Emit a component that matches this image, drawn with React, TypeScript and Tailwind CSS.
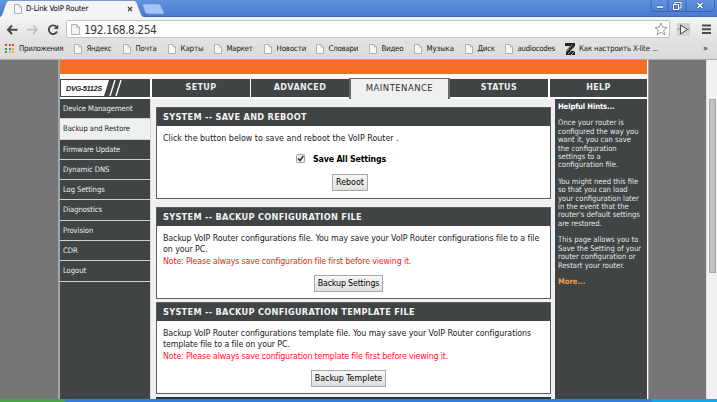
import type { ReactNode } from "react";

const sans = "font-['DejaVu_Sans_Condensed','DejaVu_Sans',sans-serif] [font-stretch:condensed]";

function Page({ large = false }: { large?: boolean }) {
  return (
    <svg viewBox="0 0 8 10" className={large ? "h-[11px] w-[9px] shrink-0" : "h-[10px] w-[8px] shrink-0"}>
      <path d="M.5.5H5L7.5 3V9.5H.5Z" fill="#f7f7f7" stroke="#a2a2a2" strokeWidth=".8" />
      <path d="M5 .5V3H7.5" fill="none" stroke="#a2a2a2" strokeWidth=".7" />
    </svg>
  );
}

const bookmarks = [
  { label: "Яндекс", cls: "w-[49px] tracking-[-0.3px]" },
  { label: "Почта", cls: "w-[45px] tracking-[-0.2px]" },
  { label: "Карты", cls: "w-[46px] tracking-[-0.1px]" },
  { label: "Маркет", cls: "w-[50px] tracking-[-0.2px]" },
  { label: "Новости", cls: "w-[52px] tracking-[-0.1px]" },
  { label: "Словари", cls: "w-[53px] tracking-[-0.2px]" },
  { label: "Видео", cls: "w-[45px] tracking-[-0.2px]" },
  { label: "Музыка", cls: "w-[51px] tracking-[-0.1px]" },
  { label: "Диск", cls: "w-[40px] tracking-[-0.2px]" },
  { label: "audiocodes", cls: "w-[60px] tracking-[-0.25px]" },
];

const dotColors = ["#e33b2e", "#e33b2e", "#e33b2e", "#30a04c", "#3a7be0", "#f0b020", "#30a04c", "#f0b020", "#f0b020"];

function Chrome() {
  return (
    <header className="h-[60px] shrink-0 border-b border-[#a9adb3] bg-[#dedede]">
      <div className="flex h-[17px] justify-between border-b border-[#3f6cba] bg-gradient-to-b from-[#6092df] to-[#4b7bd0]">
        <div className="relative h-[18px] w-[166px]">
          <svg viewBox="0 0 166 18" className="absolute inset-0 h-[18px] w-[166px]">
            <path d="M0 18V17Q2 16 3 12L6 3Q7 .5 9 .5H134Q136 .5 137 3L141 14Q142 17 145 17V18Z" fill="#f5f5f5" />
            <path d="M0 17Q2 16 3 12L6 3Q7 .5 9 .5H134Q136 .5 137 3L141 14Q142 17 145 17" fill="none" stroke="#587eb9" strokeWidth=".6" />
            <path d="M144 4H158Q160 4 161 6L164 13Q164 14 162 14H149Q146 14 145 12L143 6Q142 4 144 4Z" fill="#a4c5f6" stroke="#6f98d9" strokeWidth=".7" />
            <path d="M128 7l4 4m0-4l-4 4" stroke="#444" strokeWidth="1.2" />
          </svg>
          <div className="relative flex h-[18px] items-center gap-[4px] pl-[14px] text-[7.8px] tracking-[-0.14px] text-black">
            <Page />
            <span>D-Link VoIP Router</span>
          </div>
        </div>
        <svg viewBox="0 0 66 13" className="mr-[1px] h-[13px] w-[66px]">
          <path d="M1 0V9Q1 11.5 4 11.5H61Q64.500 11.5 64.500 8V0M18 0V11M36 0V11" fill="none" stroke="#345d9f" strokeWidth=".8" />
          <path d="M7 7H13" stroke="#34578f" strokeWidth="3.2" />
          <path d="M7 7H13" stroke="#fff" strokeWidth="1.6" />
          <path d="M25 4V2.500H31V8H29M23.500 4.500H28.500V9.500H23.500Z" fill="none" stroke="#34578f" strokeWidth="2.200" />
          <path d="M25 4V2.500H31V8H29M23.500 4.500H28.500V9.500H23.500Z" fill="none" stroke="#fff" strokeWidth="1.1" />
          <path d="M47.500 3l5 5m0-5l-5 5" stroke="#34578f" strokeWidth="3" />
          <path d="M47.500 3l5 5m0-5l-5 5" stroke="#fff" strokeWidth="1.5" />
        </svg>
      </div>
      <div className="flex h-[21px] items-end bg-gradient-to-b from-[#f5f5f5] to-[#e4e4e4]">
        <svg viewBox="0 0 66 21" className="h-[21px] w-[66px]" fill="none">
          <path d="M17.500 12.700H8.500M12 8.500L8 12.700L12 17" stroke="#484848" strokeWidth="2" />
          <path d="M27 12.700H36.500M33 8.500L37 12.700L33 17" stroke="#bdbdbd" strokeWidth="1.700" />
          <path d="M56.500 10A4.300 4.300 0 1 0 57 14.500" stroke="#484848" strokeWidth="1.900" />
          <path d="M58.200 7.500V12H53.700Z" fill="#484848" />
        </svg>
        <div className="flex h-[18px] w-[604px] items-center rounded-[2px] border border-[#c2c2c2] bg-white pl-[4px]">
          <Page large />
          <span className="mt-px ml-[4px] text-[12px] leading-[16px] tracking-[-0.5px] text-[#3a3a3a]">192.168.8.254</span>
          <svg viewBox="0 0 14 14" className="mr-[1px] ml-auto h-[14px] w-[14px]">
            <path d="M7 1L8.700 5.100L13 5.500L9.700 8.300L10.800 12.700L7 10.300L3.200 12.700L4.300 8.300L1 5.500L5.300 5.100Z" fill="#fff" stroke="#8a8a8a" strokeWidth=".9" />
          </svg>
        </div>
        <svg viewBox="0 0 47 18" className="h-[18px] w-[47px]">
          <rect x="7" y="3" width="13" height="13" rx="2" fill="#d0d0d0" />
          <path d="M7 9H20" stroke="#9d9d9d" strokeWidth="1.200" />
          <path d="M10.500 5L17.500 9.500L10.500 14Z" fill="#eee" stroke="#515151" strokeWidth="1" />
          <path d="M32 5.500H41M32 9.300H41M32 13H41" stroke="#4c4c4c" strokeWidth="2" />
        </svg>
      </div>
      <div className="flex h-[21px] items-center bg-gradient-to-b from-[#e3e3e3] to-[#dadada] pl-[5px] text-[7.8px] text-[#181818]">
        <div className="grid grid-cols-3 gap-[1.5px]">
          {dotColors.map((c, i) => (
            <i key={i} className="size-[2px]" style={{ backgroundColor: c }} />
          ))}
        </div>
        <span className="ml-[5px] w-[55px] whitespace-nowrap tracking-[-0.3px]">Приложения</span>
        {bookmarks.map((b) => (
          <div key={b.label} className={`flex shrink-0 items-center gap-[4.5px] whitespace-nowrap ${b.cls}`}>
            <Page />
            <span>{b.label}</span>
          </div>
        ))}
        <svg viewBox="0 0 10 12" className="h-[12px] w-[10px] shrink-0">
          <path d="M0 0H10V3L5 8H10V12H1V8L5 3H0Z" fill="#222" />
          <path d="M1 9L7 2M3 11L9 5M6 12L10 8" stroke="#bbb" strokeWidth=".8" />
        </svg>
        <span className="ml-[4px] whitespace-nowrap tracking-[-0.17px]">Как настроить X-lite ...</span>
        <span className="mr-[9px] ml-auto text-[9px]">»</span>
      </div>
    </header>
  );
}

function Tab({ label, cls, active = false }: { label: string; cls: string; active?: boolean }) {
  return (
    <div
      className={`flex items-center justify-center font-['DejaVu_Sans',sans-serif] [font-stretch:normal] ${cls} ${
        active
          ? "h-[21px] border-x-2 border-t border-[#686b6b] bg-[#f0f0f0] pb-[2px] text-[8.5px] tracking-[0.45px] text-[#303030]"
          : "h-[18px] bg-[#404444] text-[8px] font-bold tracking-[0.4px] text-[#eee]"
      }`}
    >
      {label}
    </div>
  );
}

const menu = ["Device Management", "Backup and Restore", "Firmware Update", "Dynamic DNS", "Log Settings", "Diagnostics", "Provision", "CDR", "Logout"];

function Panel({ title, children, cls }: { title: string; children: ReactNode; cls: string }) {
  return (
    <section className={`h-[92px] shrink-0 border border-[#5c5f5f] bg-white ${cls}`}>
      <h2 className="flex h-[18px] items-center bg-[#404444] pl-[6px] font-['DejaVu_Sans',sans-serif] text-[8.2px] font-bold tracking-[0.3px] whitespace-nowrap text-[#f2f2f2] [font-stretch:normal]">
        {title}
      </h2>
      <div className="px-[6px] text-[8.8px] leading-[11.4px] whitespace-nowrap text-[#222]">{children}</div>
    </section>
  );
}

function Button({ label, cls }: { label: string; cls: string }) {
  return (
    <button
      className={`block h-[17px] border border-[#a8a8a8] bg-gradient-to-b from-[#f6f6f6] to-[#dfdfdf] text-center text-[8.8px] leading-[15px] text-black ${cls}`}
    >
      {label}
    </button>
  );
}

export default function App() {
  return (
    <div className={`flex h-[402px] w-[717px] flex-col overflow-hidden bg-[#767676] ${sans}`}>
      <Chrome />
      <div className="flex h-[339px] shrink-0">
        <div className="w-[58px] bg-[#767676]" />
        <main className="flex h-[339px] w-[591px] flex-col overflow-hidden border-l-2 border-r border-[#a2a5a8] bg-white pr-[1px]">
          <div className="h-[14px] shrink-0 bg-[#f56f22]" />
          <nav className="mt-[4px] flex h-[21px] shrink-0 bg-white">
            <div className="mt-px mr-[2px] flex h-[18px] w-[90px] border border-[#404444] bg-[#404444]">
              <svg viewBox="0 0 88 16" className="h-[16px] w-[88px]">
                <path d="M0 0H48L43 16H0Z" fill="#fff" />
                <path d="M54 0L49 16M60 0L55 16" stroke="#fff" strokeWidth="1.400" />
                <text x="5" y="11" fontSize="7.300" fontWeight="bold" fontStyle="italic" fontFamily="Liberation Sans, sans-serif" textLength="36" fill="#202020">DVG-5112S</text>
              </svg>
            </div>
            <Tab label="SETUP" cls="mt-px w-[98px]" />
            <Tab label="ADVANCED" cls="mt-px ml-px w-[98px]" />
            <Tab label="MAINTENANCE" cls="w-[101px]" active />
            <Tab label="STATUS" cls="mt-px w-[98px]" />
            <Tab label="HELP" cls="mt-px ml-[2px] w-[97px]" />
          </nav>
          <div className="flex h-[300px] shrink-0 bg-[#f0f0f0]">
            <aside className="w-[91px] border-r border-[#d8d8d8] bg-[#404444]">
              {menu.map((m, i) => (
                <div
                  key={m}
                  className={`flex h-[20.3px] items-center border-b border-[#d0d1d1] pl-[3px] text-[7.6px] tracking-[-0.06px] whitespace-nowrap ${
                    i === 1 ? "bg-[#f0f0f0] text-[#222]" : "text-[#eee]"
                  }`}
                >
                  {m}
                </div>
              ))}
            </aside>
            <div className="ml-[5px] w-[395px] pt-[8px]">
              <Panel title="SYSTEM -- SAVE AND REBOOT" cls="">
                <p className="pt-[7px] tracking-[0.02px]">Click the button below to save and reboot the VoIP Router .</p>
                <label className="mt-[8.8px] flex h-[11px] items-center pl-[133px]">
                  <svg viewBox="0 0 9 9" className="size-[9px]">
                    <rect x=".5" y=".5" width="8" height="8" rx="1" fill="#eee" stroke="#a5a5a5" />
                    <path d="M2 4.500L4 6.500L7.300 2" fill="none" stroke="#333" strokeWidth="1.500" />
                  </svg>
                  <span className="ml-[8px] pt-px text-[8.8px] font-bold tracking-[-0.18px] text-black">Save All Settings</span>
                </label>
                <Button label="Reboot" cls="mt-[9.8px] ml-[169px] w-[36px]" />
              </Panel>
              <Panel title="SYSTEM -- BACKUP CONFIGURATION FILE" cls="mt-[8px]">
                <p className="pt-[7px] tracking-[-0.08px]">
                  Backup VoIP Router configurations file. You may save your VoIP Router configurations file to a file
                  <br />
                  on your PC.
                  <br />
                  <span className="tracking-[-0.16px] text-[#fa181e]">Note: Please always save configuration file first before viewing it.</span>
                </p>
                <Button label="Backup Settings" cls="mt-[7.4px] ml-[151px] w-[69px] tracking-[-0.16px]" />
              </Panel>
              <Panel title="SYSTEM -- BACKUP CONFIGURATION TEMPLATE FILE" cls="mt-[3px]">
                <p className="pt-[7px] tracking-[-0.08px]">
                  Backup VoIP Router configurations template file. You may save your VoIP Router configurations
                  <br />
                  <span className="tracking-[-0.11px]">template file to a file on your PC.</span>
                  <br />
                  <span className="tracking-[-0.16px] text-[#fa181e]">Note: Please always save configuration template file first before viewing it.</span>
                </p>
                <Button label="Backup Templete" cls="mt-[7.4px] ml-[148px] w-[75px]" />
              </Panel>
              <div className="mt-[3px] h-[3px] bg-[#303333]" />
            </div>
            <aside className="ml-auto w-[92px] bg-[#404444] pt-[4px] pl-[3px] text-[7.6px] leading-[8.4px] whitespace-nowrap text-[#e4e4e4]">
              <h3 className="font-bold tracking-[-0.1px] text-white">Helpful Hints...</h3>
              <p className="mt-[8px]">
                Once your router is<br />configured the way you<br />want it, you can save<br />the configuration<br />settings to a<br />configuration file.
              </p>
              <p className="mt-[8px]">
                You might need this file<br />so that you can load<br />your configuration later<br />in the event that the<br />router's default settings<br />are restored.
              </p>
              <p className="mt-[8px]">
                This page allows you to<br />Save the Setting of your<br />router configuration or<br />Restart your router.
              </p>
              <p className="mt-[8px] font-bold text-[#f39a50]">More...</p>
            </aside>
          </div>
        </main>
        <div className="w-[57px] bg-[#767676]" />
        <div className="w-[11px] border-l border-[#ddd] bg-[#f1f1f1] pt-[39px] pl-[2px]">
          <div className="h-[174px] w-[7px] border border-[#a8a8a8] bg-[#c1c1c1]" />
        </div>
      </div>
      <footer className="flex h-[3px] shrink-0">
        <div className="w-[65px] rounded-tr-[3px] bg-[#4aa348]" />
        <div className="w-[587px] bg-[#357ddd]" />
        <div className="w-[65px] bg-[#12a8ea]" />
      </footer>
    </div>
  );
}
